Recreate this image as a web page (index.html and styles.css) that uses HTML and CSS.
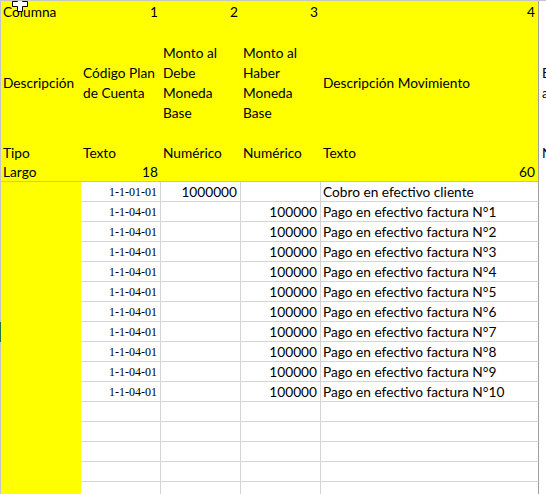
FILE: index.html
```html
<!DOCTYPE html>
<html lang="es">
<head>
<meta charset="utf-8">
<title>Hoja</title>
<link rel="stylesheet" href="styles.css">
</head>
<body>
<div class="sheet">
  <!-- row 1 -->
  <div class="c a y">Columna</div>
  <div class="c y r">1</div>
  <div class="c y r">2</div>
  <div class="c y r">3</div>
  <div class="c y r e">4</div>
  <div class="c f"></div>
  <!-- row 2 -->
  <div class="c a y">Descripción</div>
  <div class="c y">Código Plan<br>de Cuenta</div>
  <div class="c y">Monto al<br>Debe<br>Moneda<br>Base</div>
  <div class="c y">Monto al<br>Haber<br>Moneda<br>Base</div>
  <div class="c y e">Descripción Movimiento</div>
  <div class="c f">Estado<br>asiento</div>
  <!-- row 3 -->
  <div class="c a y">Tipo</div>
  <div class="c y">Texto</div>
  <div class="c y">Numérico</div>
  <div class="c y">Numérico</div>
  <div class="c y e">Texto</div>
  <div class="c f">Numérico</div>
  <!-- row 4 -->
  <div class="c a y hb">Largo</div>
  <div class="c y r hb">18</div>
  <div class="c y hb"></div>
  <div class="c y hb"></div>
  <div class="c y r e hb">60</div>
  <div class="c f"></div>
  <!-- data -->
  <div class="c a y"></div><div class="c g r code">1-1-01-01</div><div class="c g r">1000000</div><div class="c g"></div><div class="c g e">Cobro en efectivo cliente</div><div class="c f"></div>
  <div class="c a y"></div><div class="c g r code">1-1-04-01</div><div class="c g"></div><div class="c g r">100000</div><div class="c g e">Pago en efectivo factura N°1</div><div class="c f"></div>
  <div class="c a y"></div><div class="c g r code">1-1-04-01</div><div class="c g"></div><div class="c g r">100000</div><div class="c g e">Pago en efectivo factura N°2</div><div class="c f"></div>
  <div class="c a y"></div><div class="c g r code">1-1-04-01</div><div class="c g"></div><div class="c g r">100000</div><div class="c g e">Pago en efectivo factura N°3</div><div class="c f"></div>
  <div class="c a y"></div><div class="c g r code">1-1-04-01</div><div class="c g"></div><div class="c g r">100000</div><div class="c g e">Pago en efectivo factura N°4</div><div class="c f"></div>
  <div class="c a y"></div><div class="c g r code">1-1-04-01</div><div class="c g"></div><div class="c g r">100000</div><div class="c g e">Pago en efectivo factura N°5</div><div class="c f"></div>
  <div class="c a y"></div><div class="c g r code">1-1-04-01</div><div class="c g"></div><div class="c g r">100000</div><div class="c g e">Pago en efectivo factura N°6</div><div class="c f"></div>
  <div class="c a y sel"></div><div class="c g r code">1-1-04-01</div><div class="c g"></div><div class="c g r">100000</div><div class="c g e">Pago en efectivo factura N°7</div><div class="c f"></div>
  <div class="c a y"></div><div class="c g r code">1-1-04-01</div><div class="c g"></div><div class="c g r">100000</div><div class="c g e">Pago en efectivo factura N°8</div><div class="c f"></div>
  <div class="c a y"></div><div class="c g r code">1-1-04-01</div><div class="c g"></div><div class="c g r">100000</div><div class="c g e">Pago en efectivo factura N°9</div><div class="c f"></div>
  <div class="c a y"></div><div class="c g r code">1-1-04-01</div><div class="c g"></div><div class="c g r">100000</div><div class="c g e">Pago en efectivo factura N°10</div><div class="c f"></div>
  <!-- empty rows -->
  <div class="c a y"></div><div class="c g"></div><div class="c g"></div><div class="c g"></div><div class="c g e"></div><div class="c f"></div>
  <div class="c a y"></div><div class="c g"></div><div class="c g"></div><div class="c g"></div><div class="c g e"></div><div class="c f"></div>
  <div class="c a y"></div><div class="c g"></div><div class="c g"></div><div class="c g"></div><div class="c g e"></div><div class="c f"></div>
  <div class="c a y"></div><div class="c g"></div><div class="c g"></div><div class="c g"></div><div class="c g e"></div><div class="c f"></div>
  <div class="c a y"></div><div class="c g"></div><div class="c g"></div><div class="c g"></div><div class="c g e"></div><div class="c f"></div>

  <svg class="cursor" width="16" height="16" viewBox="0 0 16 16" aria-hidden="true">
    <path d="M5.5 0.5 H10.5 V5.5 H15.5 V10.5 H10.5 V15.5 H5.5 V10.5 H0.5 V5.5 H5.5 Z" fill="#fff" stroke="#000" stroke-width="1"/>
  </svg>
</div>
</body>
</html>
```

FILE: styles.css
```css
html, body {
  margin: 0;
  padding: 0;
  background: #ffffff;
  overflow: hidden;
}

.sheet {
  position: relative;
  width: 546px;
  height: 494px;
  overflow: hidden;
  border-top: 1px solid #c6c6c6;
  box-sizing: border-box;
  display: grid;
  grid-template-columns: 81px 80px 80px 80px 218px 1fr;
  grid-template-rows: 21px 120px 20px 20px repeat(16, 20px);
  font-family: "Lato", "Liberation Sans", sans-serif;
  font-size: 13.7px;
  color: #000;
}

.c {
  box-sizing: border-box;
  display: flex;
  align-items: center;
  padding: 1px 2px 0 2px;
  line-height: 20px;
  white-space: nowrap;
  overflow: hidden;
  min-width: 0;
}

.y { background: #ffff00; }

.a {
  border-left: 1px solid #c4c4cc;
}

.a.sel {
  border-left-color: #217346;
}

.g {
  border-right: 1px solid #d4d4d4;
  border-bottom: 1px solid #d4d4d4;
}

.e {
  border-right: 1px solid #9e9e9e;
}

.g.e {
  border-right-color: #9e9e9e;
}

.hb {
  border-bottom: 1px solid #c0c0c0;
}

.r {
  justify-content: flex-end;
  padding-right: 3px;
}

.f {
  padding-left: 3px;
  background: #ffffff;
}

.code {
  font-family: "Liberation Serif", "Times New Roman", serif;
  font-size: 12px;
  color: #000;
}

.cursor {
  position: absolute;
  left: 12px;
  top: -5px;
}
```
